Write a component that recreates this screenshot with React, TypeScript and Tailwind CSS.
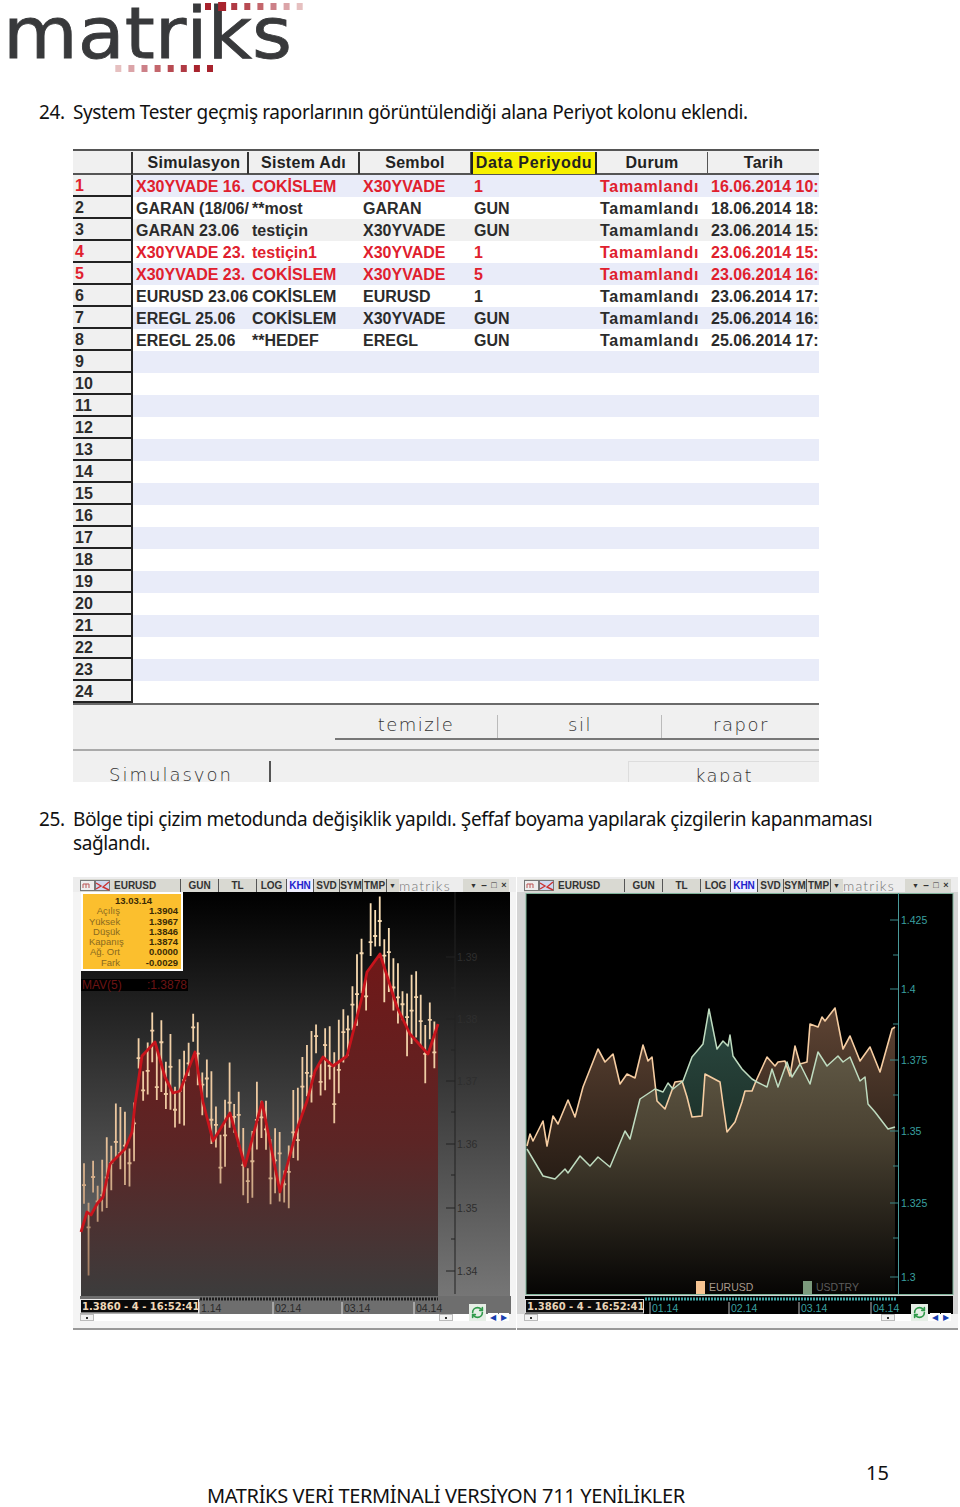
import { RefreshCw } from "lucide-react";

const rows = [
  { n: 1, red: true, bg: "bg-[#e9ecf9]", c: ["X30YVADE 16.", "COKİSLEM", "X30YVADE", "1", "Tamamlandı", "16.06.2014 10:"] },
  { n: 2, bg: "bg-white", c: ["GARAN (18/06/", "**most", "GARAN", "GUN", "Tamamlandı", "18.06.2014 18:"] },
  { n: 3, bg: "bg-[#f0f0f0]", c: ["GARAN 23.06", "testiçin", "X30YVADE", "GUN", "Tamamlandı", "23.06.2014 15:"] },
  { n: 4, red: true, bg: "bg-white", c: ["X30YVADE 23.", "testiçin1", "X30YVADE", "1", "Tamamlandı", "23.06.2014 15:"] },
  { n: 5, red: true, bg: "bg-[#e9ecf9]", c: ["X30YVADE 23.", "COKİSLEM", "X30YVADE", "5", "Tamamlandı", "23.06.2014 16:"] },
  { n: 6, bg: "bg-white", c: ["EURUSD 23.06", "COKİSLEM", "EURUSD", "1", "Tamamlandı", "23.06.2014 17:"] },
  { n: 7, bg: "bg-[#e9ecf9]", c: ["EREGL 25.06", "COKİSLEM", "X30YVADE", "GUN", "Tamamlandı", "25.06.2014 16:"] },
  { n: 8, bg: "bg-white", c: ["EREGL 25.06", "**HEDEF", "EREGL", "GUN", "Tamamlandı", "25.06.2014 17:"] },
];

const allRows = Array.from({ length: 24 }, (_, i) => {
  return rows[i] || { n: i + 1, red: false, bg: i % 2 === 0 ? "bg-[#e9ecf9]" : "bg-white", c: ["", "", "", "", "", ""] };
});

const gridCols = "grid grid-cols-[60px_116px_111px_111px_126px_111px_111px]";

// price lines, read off the picture in page coordinates
const mav: number[][] = [[81,1233],[87,1213],[91,1216],[97,1205],[103,1198],[110,1165],[125,1150],[132,1133],[135,1105],[142,1057],[155,1043],[165,1078],[173,1094],[180,1092],[195,1053],[203,1103],[213,1142],[230,1114],[245,1167],[262,1103],[280,1193],[297,1130],[307,1102],[315,1072],[323,1058],[333,1067],[347,1057],[362,998],[367,973],[380,955],[397,1008],[410,1035],[428,1055],[438,1025]];
const eur: number[][] = [[527,1147],[530,1135],[533,1142],[543,1122],[547,1147],[553,1117],[558,1125],[568,1101],[575,1118],[583,1088],[598,1050],[605,1063],[613,1055],[620,1085],[627,1075],[635,1079],[643,1046],[648,1062],[652,1058],[657,1102],[665,1110],[675,1083],[682,1082],[687,1098],[692,1118],[702,1117],[705,1075],[720,1083],[723,1105],[727,1133],[735,1123],[742,1103],[745,1092],[752,1092],[756,1082],[767,1058],[775,1067],[778,1063],[785,1062],[790,1077],[795,1047],[800,1065],[807,1063],[810,1025],[818,1028],[822,1018],[825,1022],[835,1009],[843,1050],[850,1037],[860,1062],[870,1048],[880,1073],[892,1030],[895,1028]];
const usd: number[][] = [[527,1150],[543,1177],[555,1180],[565,1170],[568,1174],[580,1157],[590,1167],[598,1158],[610,1168],[625,1132],[630,1140],[640,1100],[655,1090],[663,1093],[668,1084],[673,1090],[683,1082],[692,1058],[703,1045],[709,1010],[717,1050],[723,1042],[728,1047],[730,1036],[733,1057],[742,1070],[752,1080],[757,1083],[767,1088],[772,1070],[778,1088],[787,1063],[792,1078],[800,1065],[810,1085],[818,1053],[827,1067],[838,1057],[843,1063],[850,1058],[860,1082],[865,1078],[868,1105],[875,1113],[888,1130],[895,1128]];

const toPts = (p: number[][]) => p.map((q) => q.join(",")).join(" ");
const area = (p: number[][], bottom: number) =>
  `${p[0][0]},${bottom} ${toPts(p)} ${p[p.length - 1][0]},${bottom}`;

const yAt = (x: number) => {
  for (let i = 1; i < mav.length; i++) {
    if (x <= mav[i][0]) {
      const t = (x - mav[i - 1][0]) / (mav[i][0] - mav[i - 1][0]);
      return mav[i - 1][1] + t * (mav[i][1] - mav[i - 1][1]);
    }
  }
  return mav[mav.length - 1][1];
};
const rnd = (i: number) => {
  const v = Math.sin(i * 12.9898) * 43758.5453;
  return v - Math.floor(v);
};
const bars = Array.from({ length: 78 }, (_, i) => {
  const x = 84 + i * 4.55;
  const mid = yAt(x) + (rnd(i) - 0.55) * 70;
  const half = 14 + rnd(i + 100) * 24;
  return { x, top: mid - half, bottom: mid + half, tick: mid + (rnd(i + 200) - 0.5) * half };
});

const markets = [
  { t: "GUN", w: "w-[38px]" },
  { t: "TL", w: "w-[38px]" },
  { t: "LOG", w: "w-[30px]" },
];

function Toolbar() {
  return (
    <div className="flex h-[15px] items-center px-[7px] pt-[2px] bg-[#ededed] font-['Liberation_Sans',sans-serif] text-[10px] font-bold text-[#333]">
      <div className="flex h-[13px] flex-1 items-center bg-[#d9d9d2]">
        <svg width="31" height="13" viewBox="0 0 31 13" className="shrink-0">
          <rect x="0.5" y="1.5" width="14" height="10" fill="#eee" stroke="#777" />
          <path d="M3 9V5h3v4M6 5h3v4" fill="none" stroke="#b55" />
          <rect x="15.5" y="1.5" width="14" height="10" fill="#cfd8f0" stroke="#777" />
          <path d="M16 4l5 3-5 3M29 3l-6 5 6 3" fill="none" stroke="#c33" strokeWidth="1.4" />
        </svg>
        <span className="ml-[3px] w-[67px] border-r border-[#555] leading-[13px]">EURUSD</span>
        {markets.map((m) => (
          <span key={m.t} className={`${m.w} border-r border-[#555] text-center leading-[13px]`}>{m.t}</span>
        ))}
        <span className="w-[27px] border-r border-[#555] bg-[#eef] text-center leading-[13px] text-[#2222cc]">KHN</span>
        <span className="w-[26px] border-r border-[#555] text-center leading-[13px]">SVD</span>
        <span className="w-[23px] border-r border-[#555] text-center leading-[13px]">SYM</span>
        <span className="w-[24px] border-r border-[#555] text-center leading-[13px]">TMP</span>
        <span className="w-[11px] text-center text-[7px] leading-[13px]">▼</span>
        <span className="ml-[1px] min-w-0 flex-1 whitespace-nowrap bg-[#ededed] text-left font-['Lato',sans-serif] text-[14px] font-light leading-[13px] tracking-[1.2px] text-[#777]">matriks</span>
        <span className="w-[14px] text-right text-[7px] leading-[13px]">▼</span>
        <span className="ml-[2px] w-[10px] text-center leading-[13px]">–</span>
        <span className="w-[10px] text-center text-[9px] leading-[13px]">□</span>
        <span className="w-[10px] text-center text-[9px] leading-[13px]">×</span>
      </div>
    </div>
  );
}

function ScrollRow() {
  return (
    <div className="relative h-[14px] px-[7px]">
      <div className="flex h-[7px] justify-between bg-white">
        <div className="flex h-[7px] w-[14px] items-center justify-center border border-[#bbb] bg-[#f2f2f2]">
          <div className="h-[2px] w-[2px] bg-[#333]" />
        </div>
        <div className="mr-[56px] flex h-[7px] w-[14px] items-center justify-center border border-[#bbb] bg-[#f2f2f2]">
          <div className="h-[2px] w-[2px] bg-[#333]" />
        </div>
      </div>
      <div className="absolute bottom-[7px] right-[7px] flex items-end gap-[1px]">
        <div className="mr-[1px] flex h-[17px] w-[17px] items-center justify-center bg-[#e6eee6]">
          <RefreshCw size={13} strokeWidth={3} className="text-[#2f9a4a]" />
        </div>
        <div className="flex h-[8px] w-[10px] items-center justify-center bg-white text-[8px] leading-none text-[#1a3fb0]">◀</div>
        <div className="flex h-[8px] w-[10px] items-center justify-center bg-white text-[8px] leading-none text-[#1a3fb0]">▶</div>
      </div>
    </div>
  );
}

function LeftChart() {
  const ticks = [
    { t: "1.39", y: 958 }, { t: "1.38", y: 1020 }, { t: "1.37", y: 1082 },
    { t: "1.36", y: 1145 }, { t: "1.35", y: 1209 }, { t: "1.34", y: 1272 },
  ];
  const labels = [{ t: "1.14", x: 201 }, { t: "02.14", x: 275 }, { t: "03.14", x: 344 }, { t: "04.14", x: 416 }];
  return (
    <svg width="443" height="422" viewBox="73 893 443 422" className="block">
      <defs>
        <linearGradient id="lbg" x1="0" y1="893" x2="0" y2="1297" gradientUnits="userSpaceOnUse">
          <stop offset="0" stopColor="#000" />
          <stop offset="1" stopColor="#767676" />
        </linearGradient>
        <linearGradient id="lred" x1="0" y1="955" x2="0" y2="1297" gradientUnits="userSpaceOnUse">
          <stop offset="0" stopColor="#701818" />
          <stop offset="0.55" stopColor="#5c2525" />
          <stop offset="1" stopColor="#3c3c3c" />
        </linearGradient>
        <linearGradient id="lbar" x1="0" y1="920" x2="0" y2="1280" gradientUnits="userSpaceOnUse">
          <stop offset="0" stopColor="#fbe0b6" />
          <stop offset="0.6" stopColor="#eac49c" />
          <stop offset="1" stopColor="#a07a60" />
        </linearGradient>
      </defs>
      <rect x="81" y="893" width="429" height="404" fill="url(#lbg)" />
      <polygon points={area(mav, 1297)} fill="url(#lred)" />
      {bars.map((b, i) => (
        <g key={i} stroke="url(#lbar)" strokeWidth="1.8" fill="none">
          <line x1={b.x} y1={b.top} x2={b.x + 0.01} y2={b.bottom} />
          <line x1={b.x - 2} y1={b.tick} x2={b.x + 2} y2={b.tick + 0.01} />
        </g>
      ))}
      <polyline points={toPts(mav)} fill="none" stroke="#c8141c" strokeWidth="2.8" strokeLinejoin="round" />
      <line x1="455" y1="893" x2="455" y2="1295" stroke="#222" />
      {ticks.map((k) => (
        <g key={k.t}>
          <line x1="446" y1={k.y} x2="455" y2={k.y} stroke="#222" />
          <line x1="451" y1={k.y + 31} x2="455" y2={k.y + 31} stroke="#222" />
          <text x="457" y={k.y + 4} fontSize="10.5" fill="#2e2e2e" fontFamily="'Liberation Sans', sans-serif">{k.t}</text>
        </g>
      ))}
      <rect x="80" y="1297" width="431" height="18" fill="#6e6e6e" />
      <line x1="200" y1="1300" x2="438" y2="1300" stroke="#1c1c1c" strokeWidth="3" strokeDasharray="2 1" />
      <rect x="80.5" y="1300.5" width="118" height="13.5" fill="#0a0a0a" stroke="#eee" />
      <text x="82" y="1311" fontSize="10" fontWeight="700" fill="#f0d8b8" fontFamily="'DejaVu Sans', sans-serif">1.3860 - 4 - 16:52:41</text>
      {labels.map((l) => (
        <g key={l.t}>
          <line x1={l.x - 2} y1="1303" x2={l.x - 2} y2="1315" stroke="#ddd" />
          <text x={l.x} y="1313" fontSize="10.5" fill="#2a2a2a" fontFamily="'Liberation Sans', sans-serif">{l.t}</text>
        </g>
      ))}
    </svg>
  );
}

function RightChart() {
  const ticks = [
    { t: "1.425", y: 921 }, { t: "1.4", y: 990 }, { t: "1.375", y: 1061 },
    { t: "1.35", y: 1132 }, { t: "1.325", y: 1204 }, { t: "1.3", y: 1278 },
  ];
  const labels = [{ t: "01.14", x: 652 }, { t: "02.14", x: 731 }, { t: "03.14", x: 801 }, { t: "04.14", x: 873 }];
  return (
    <svg width="441" height="422" viewBox="517 893 441 422" className="block">
      <defs>
        <linearGradient id="rp" x1="0" y1="1010" x2="0" y2="1295" gradientUnits="userSpaceOnUse">
          <stop offset="0" stopColor="#5e4434" />
          <stop offset="0.45" stopColor="#34261c" />
          <stop offset="1" stopColor="#060403" />
        </linearGradient>
        <linearGradient id="rg" x1="0" y1="1010" x2="0" y2="1140" gradientUnits="userSpaceOnUse">
          <stop offset="0" stopColor="#2c4a42" />
          <stop offset="1" stopColor="#1c3028" />
        </linearGradient>
        <linearGradient id="ro" x1="0" y1="1030" x2="0" y2="1295" gradientUnits="userSpaceOnUse">
          <stop offset="0" stopColor="#665e4a" />
          <stop offset="0.4" stopColor="#4a4232" />
          <stop offset="1" stopColor="#060504" />
        </linearGradient>
        <clipPath id="rclip">
          <polygon points={area(usd, 1295)} />
        </clipPath>
      </defs>
      <rect x="517" y="893" width="441" height="422" fill="#d4d4d4" />
      <rect x="526" y="894.5" width="427" height="401" fill="#000" stroke="#7fb39a" />
      <polygon points={area(usd, 1295)} fill="url(#rg)" />
      <polygon points={area(eur, 1295)} fill="url(#rp)" />
      <polygon points={area(eur, 1295)} fill="url(#ro)" clipPath="url(#rclip)" />
      <polyline points={toPts(eur)} fill="none" stroke="#f6cda2" strokeWidth="1.6" strokeLinejoin="round" />
      <polyline points={toPts(usd)} fill="none" stroke="#bfdcc0" strokeWidth="1.5" strokeLinejoin="round" />
      <line x1="898.5" y1="894" x2="898.5" y2="1295" stroke="#4a9a9a" />
      {ticks.map((k) => (
        <g key={k.t}>
          <line x1="890" y1={k.y} x2="898" y2={k.y} stroke="#3c8a8a" />
          {k.y < 1270 && <line x1="893" y1={k.y + 35} x2="898" y2={k.y + 35} stroke="#3c8a8a" />}
          <text x="901" y={k.y + 4} fontSize="10.5" fill="#3aa0a0" fontFamily="'Liberation Sans', sans-serif">{k.t}</text>
        </g>
      ))}
      <rect x="696" y="1282" width="9" height="13" fill="#f6c492" />
      <text x="709" y="1292" fontSize="10.5" fill="#a89a8c" fontFamily="'Liberation Sans', sans-serif">EURUSD</text>
      <rect x="803" y="1282" width="9" height="13" fill="#7c9a7c" />
      <text x="816" y="1292" fontSize="10.5" fill="#5c5c5c" fontFamily="'Liberation Sans', sans-serif">USDTRY</text>
      <rect x="525" y="1297" width="428" height="18" fill="#000" />
      <line x1="645" y1="1300" x2="896" y2="1300" stroke="#3fa5a5" strokeWidth="3" strokeDasharray="2 1" />
      <rect x="525.5" y="1300.5" width="118" height="13.5" fill="#0a0a0a" stroke="#ddd" />
      <text x="527" y="1311" fontSize="10" fontWeight="700" fill="#e8d4b8" fontFamily="'DejaVu Sans', sans-serif">1.3860 - 4 - 16:52:41</text>
      {labels.map((l) => (
        <g key={l.t}>
          <line x1={l.x - 2} y1="1303" x2={l.x - 2} y2="1315" stroke="#bbb" />
          <text x={l.x} y="1313" fontSize="10.5" fill="#3aa0a0" fontFamily="'Liberation Sans', sans-serif">{l.t}</text>
        </g>
      ))}
    </svg>
  );
}

const ohlc = [
  ["Açılış", "1.3904"], ["Yüksek", "1.3967"], ["Düşük", "1.3846"],
  ["Kapanış", "1.3874"], ["Ağ. Ort", "0.0000"], ["Fark", "-0.0029"],
];

export default function App() {
  const reds = [
    "#a8232d", "#a8232d", "#b03a44", "#b84a52", "#c4666c", "#cc8088", "#dba4a8", "#e6c0c0",
  ];
  return (
    <div className="h-[1507px] w-[960px] overflow-hidden bg-white font-['Noto_Sans',sans-serif] text-[#111]">
      {/* Logo */}
      <svg width="310" height="76" viewBox="0 0 310 76" className="block">
        <text x="3" y="58" fontSize="72" textLength="289" lengthAdjust="spacingAndGlyphs" fill="#38393b" stroke="#38393b" strokeWidth="0.8" fontFamily="'DejaVu Sans', sans-serif">matriks</text>
        {reds.map((c, i) => (
          <rect key={i} x={205 + i * 13.1} y={i === 1 ? 2 : 3} width={i === 1 ? 8 : 6} height={i === 1 ? 9 : 7} fill={c} />
        ))}
        {reds.map((c, i) => (
          <rect key={i} x={207 - i * 13.1} y="65" width="6" height="7" fill={c} />
        ))}
      </svg>

      <div className="ml-[39px] mt-[24px] flex text-[19px] leading-[24px] tracking-[-0.38px]">
        <span className="w-[34px]">24.</span>
        <span>System Tester geçmiş raporlarının görüntülendiği alana Periyot kolonu eklendi.</span>
      </div>

      {/* Results table */}
      <div className="ml-[73px] mt-[25px] w-[746px] bg-white font-['Liberation_Sans',sans-serif] text-[16px] font-bold">
        <div className={`${gridCols} h-[26px] border-y-2 border-y-[#555] bg-[#f0f0f0] whitespace-nowrap pt-[1px] text-center leading-[22px] tracking-[0.3px] text-[#222]`}>
          <div className="border-r-2 border-[#333]" />
          <div className="border-r-2 border-[#333] pl-[8px]">Simulasyon</div>
          <div className="border-r-2 border-[#333]">Sistem Adı</div>
          <div className="border-r border-[#555]">Sembol</div>
          <div className="border-x-2 border-[#222] bg-[#f7f000] tracking-[0.7px]">Data Periyodu</div>
          <div className="border-r border-[#555]">Durum</div>
          <div>Tarih</div>
        </div>
        {allRows.map((r) => (
          <div key={r.n} className={`${gridCols} h-[22px] grid-rows-[22px] ${r.red ? "text-[#e0202e]" : "text-[#2b2b2b]"}`}>
            <div className="overflow-hidden border-b-2 border-r-2 border-[#222] bg-[#f0f0f0] pl-[2px] pt-[1px] text-[16px] leading-[19px]">{r.n}</div>
            <div className={`col-span-6 grid grid-cols-[116px_111px_111px_126px_111px_111px] grid-rows-[22px] leading-[23px] ${r.bg}`}>
              {r.c.map((v, i) => (
                <div key={i} className={`overflow-hidden whitespace-nowrap pl-[3px] ${i === 4 ? "tracking-[0.7px]" : ""}`}>{v}</div>
              ))}
            </div>
          </div>
        ))}
        <div className="h-[2px] bg-[#6a6a6a]" />
        <div className="h-[77px] bg-[#f0f0f0] pt-[6px] font-['DejaVu_Sans',sans-serif] text-[18px] font-extralight tracking-[1.5px] text-[#333]">
          <div className="ml-[262px] flex h-[29px] gap-[1px] border-b-2 border-[#777] pt-[4px] text-center leading-[20px]">
            <div className="w-[163px] border-r border-[#bbb]">temizle</div>
            <div className="w-[163px] border-r border-[#bbb]">sil</div>
            <div className="flex-1">rapor</div>
          </div>
          <div className="mt-[9px] h-[2px] bg-[#aaa]" />
          <div className="mt-[10px] flex h-[21px] justify-between overflow-hidden text-center leading-[28px]">
            <div className="w-[198px] border-r-2 border-[#555] tracking-[2px]">Simulasyon</div>
            <div className="w-[191px] border-l border-t border-[#ddd]">kapat</div>
          </div>
        </div>
      </div>

      <div className="ml-[39px] mt-[25px] flex text-[19px] leading-[24px] tracking-[-0.38px]">
        <span className="w-[34px]">25.</span>
        <span>
          Bölge tipi çizim metodunda değişiklik yapıldı. Şeffaf boyama yapılarak çizgilerin kapanmaması
          <br />
          sağlandı.
        </span>
      </div>

      {/* Charts */}
      <div className="ml-[73px] mt-[22px] flex w-[885px] gap-[1px]">
        <div className="relative w-[443px] border-b-2 border-[#999] bg-[#f4f4f4]">
          <Toolbar />
          <LeftChart />
          <ScrollRow />
          <div className="absolute left-[8px] top-[15px] h-[79px] w-[102px] border-2 border-white bg-[#fbbf2e] pl-[6px] pr-[3px] pt-[2px] font-['Liberation_Sans',sans-serif] text-[9.5px] leading-[10.3px]">
            <div className="text-center font-bold text-[#3a2a05]">13.03.14</div>
            {ohlc.map(([k, v]) => (
              <div key={k} className="flex">
                <span className="w-[31px] whitespace-nowrap text-right text-[#8a6a20]">{k}</span>
                <span className="flex-1 text-right font-bold text-[#3a2a05]">{v}</span>
              </div>
            ))}
          </div>
          <div className="absolute left-[8px] top-[102px] flex h-[12px] w-[107px] justify-between bg-black px-[1px] font-['Liberation_Sans',sans-serif] text-[12px] leading-[12px] text-[#6c1414]">
            <span>MAV(5)</span>
            <span>:1.3878</span>
          </div>
        </div>
        <div className="relative w-[441px] border-b-2 border-[#999] bg-[#f4f4f4]">
          <Toolbar />
          <RightChart />
          <ScrollRow />
        </div>
      </div>

      {/* Footer */}
      <div className="mt-[131px] flex justify-end pr-[71px] text-[20px] leading-[24px]">15</div>
      <div className="pl-[207px] text-[20px] leading-[22px] tracking-[-0.35px]">MATRİKS VERİ TERMİNALİ VERSİYON 711 YENİLİKLER</div>
    </div>
  );
}
